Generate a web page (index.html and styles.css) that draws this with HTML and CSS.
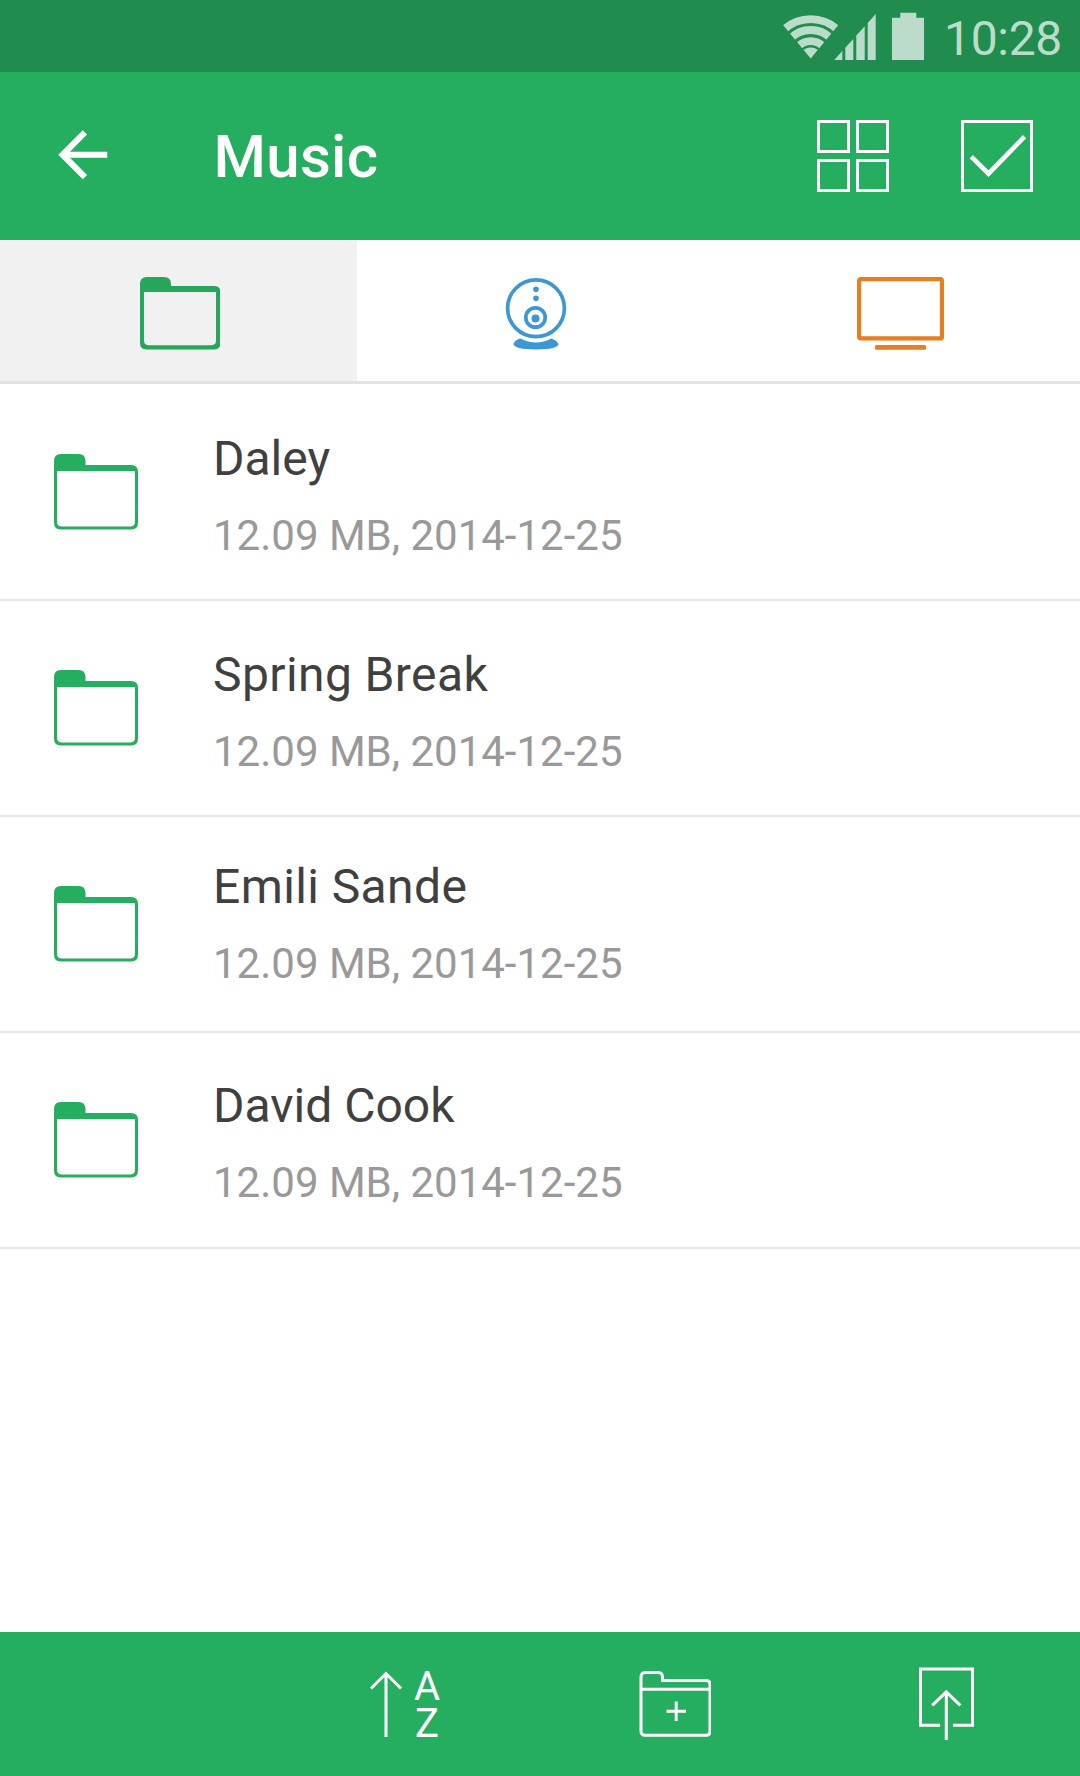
FILE: index.html
```html
<!DOCTYPE html>
<html lang="en">
<head>
    <meta charset="UTF-8">
    <meta name="viewport" content="width=device-width, initial-scale=1.0">
    <title>Music</title>
    <link rel="stylesheet" href="styles.css">
</head>
<body>
    <!-- shared folder icon for the list -->
    <svg class="sprite" width="0" height="0">
        <symbol id="folder" viewBox="0 0 84 76">
            <path fill-rule="evenodd" d="M0 7Q0 0 7 0H24.5Q31.500 0 31.500 7V11H77Q84 11 84 18V68.500Q84 75.500 77 75.500H7Q0 75.500 0 68.500ZM3 17V67.500Q3 72.500 8 72.500H76Q81 72.500 81 67.500V17Z"/>
        </symbol>
    </svg>

    <div class="statusbar">
        <svg class="wifi" width="56" height="48" viewBox="783 12 56 48">
            <clipPath id="fan"><path d="M810.700 58.500L776.400 16.900V0H845V16.900Z"/></clipPath>
            <g clip-path="url(#fan)">
                <circle cx="810.700" cy="58.500" r="11"/>
                <g class="waves">
                    <circle cx="810.700" cy="58.500" r="17.300"/>
                    <circle cx="810.700" cy="58.500" r="28.500"/>
                    <circle cx="810.700" cy="58.500" r="39.300"/>
                </g>
            </g>
        </svg>
        <svg class="signal" width="42" height="48" viewBox="834 12 42 48">
            <path d="M834.300 60L842.300 51V60ZM845.300 47.800L853.300 38.900V60H845.300ZM856.300 35.500L864.700 26.200V60H856.300ZM867.700 22.900L875.700 14V60H867.700Z"/>
        </svg>
        <svg class="battery" width="32" height="48" viewBox="0 0 32 48">
            <path d="M8.300 .7H24.300V5.700H32V48H0V5.700H8.300Z"/>
        </svg>
        <span class="clock">10:28</span>
    </div>

    <header class="appbar">
        <svg class="back" width="73.500" height="73.500" viewBox="0 0 24 24">
            <path d="M20 11H7.830l5.590-5.590L12 4l-8 8 8 8 1.410-1.410L7.830 13H20v-2z"/>
        </svg>
        <h1>Music</h1>
        <svg class="line-icon grid-view" width="72" height="72" viewBox="0 0 72 72">
            <path d="M1.500 1.500h30v30h-30zM40.500 1.500h30v30h-30zM1.500 40.500h30v30h-30zM40.500 40.500h30v30h-30z"/>
        </svg>
        <svg class="line-icon" width="72" height="72" viewBox="0 0 72 72">
            <path d="M1.500 1.500h69v69h-69z"/>
            <path class="tick" d="M10.300 36.700L27.500 53.700L63.500 16.700"/>
        </svg>
    </header>

    <nav class="tabs">
        <div class="tab active">
            <svg class="tab-folder" width="80.500" height="73" viewBox="0 0 80.500 73">
                <path fill-rule="evenodd" d="M0 7Q0 0 7 0H24Q31 0 31 7V9H74Q80.500 9 80.500 15.500V66Q80.500 72.500 74 72.500H6.500Q0 72.500 0 66ZM4 15V63.500Q4 68.300 9 68.300H71Q76 68.300 76 63.500V15Z"/>
            </svg>
        </div>
        <div class="tab">
            <svg class="webcam" width="62" height="73" viewBox="0 0 62 73">
                <circle class="ring" cx="31" cy="31.300" r="28.400"/>
                <circle class="ring" cx="30.500" cy="40.500" r="9.700"/>
                <circle cx="31" cy="12.300" r="2.800"/>
                <circle cx="31" cy="21.300" r="2.800"/>
                <circle cx="30.500" cy="41.500" r="4"/>
                <path d="M15.500 61.600Q31 69.500 46.500 61.600Q51 63 53.500 67Q53 72.300 31 72.500Q9 72.300 8.500 67Q10 63 15.500 61.600Z"/>
            </svg>
        </div>
        <div class="tab">
            <svg class="monitor" width="87" height="73" viewBox="0 0 87 73">
                <rect class="frame" x="2.100" y="2.100" width="82.800" height="59.300" rx="1.500"/>
                <rect x="18" y="68" width="51" height="4.700" rx="1.500"/>
            </svg>
        </div>
    </nav>

    <ul class="files">
        <li>
            <svg class="folder"><use href="#folder"/></svg>
            <div class="info">
                <p class="name">Daley</p>
                <p class="meta">12.09 MB, 2014-12-25</p>
            </div>
        </li>
        <li>
            <svg class="folder"><use href="#folder"/></svg>
            <div class="info">
                <p class="name wide">Spring Break</p>
                <p class="meta">12.09 MB, 2014-12-25</p>
            </div>
        </li>
        <li>
            <svg class="folder"><use href="#folder"/></svg>
            <div class="info raised">
                <p class="name wide">Emili Sande</p>
                <p class="meta">12.09 MB, 2014-12-25</p>
            </div>
        </li>
        <li>
            <svg class="folder"><use href="#folder"/></svg>
            <div class="info last">
                <p class="name">David Cook</p>
                <p class="meta">12.09 MB, 2014-12-25</p>
            </div>
        </li>
    </ul>

    <footer class="toolbar">
        <div class="sort">
            <svg class="line-icon" width="45" height="76" viewBox="369.500 1666 45 76">
                <path d="M386.500 1737V1673M371.500 1688.500L386.500 1673.500L401.500 1688.500"/>
            </svg>
            <div class="letters">
                <span>A</span>
                <span>Z</span>
            </div>
        </div>
        <svg class="line-icon" width="72" height="76" viewBox="639 1666 72 76">
            <path d="M641 1677Q641 1672.500 645.500 1672.500H658Q662.500 1672.500 662.500 1677V1680.500H706Q710 1680.500 710 1684.500V1731Q710 1735.300 706 1735.300H645.500Q641 1735.300 641 1731ZM641 1689.300H710M676.200 1701.500V1721M666.500 1711.200H686"/>
        </svg>
        <svg class="line-icon" width="72" height="76" viewBox="909 1666 72 76">
            <path d="M940 1725.300H920.500V1669H972.500V1725.300H953M946.300 1740V1692M932.300 1705.300L946.300 1691.800L960.300 1705.300"/>
        </svg>
    </footer>
</body>
</html>
```

FILE: styles.css
```css
* {
    box-sizing: border-box;
    margin: 0;
    padding: 0;
}
body {
    display: flex;
    flex-direction: column;
    height: 1776px;
    font-family: Roboto, "Liberation Sans", sans-serif;
    background-color: #fff;
    color: #404040;
}
svg {
    display: block;
    flex: none;
}

/* status bar */
.statusbar {
    display: flex;
    align-items: flex-start;
    justify-content: flex-end;
    height: 72px;
    padding: 12px 18px 0 0;
    background-color: #208c4d;
    color: #bcdccb;
    fill: #bcdccb;
}
.waves {
    fill: none;
    stroke: #bcdccb;
    stroke-width: 7.8;
}
.wifi {
    margin-right: -5px;
}
.battery {
    margin-left: 16px;
}
.clock {
    width: 121px;
    margin-left: 17px;
    font-size: 48px;
    line-height: 54px;
    letter-spacing: -0.3px;
    text-align: right;
    white-space: nowrap;
}

/* app bar */
.appbar {
    display: flex;
    align-items: center;
    height: 168px;
    padding: 0 47px 0 46px;
    background-color: #26ae60;
    color: #fff;
}
.back {
    margin-bottom: 3px;
    fill: #fff;
}
.appbar h1 {
    flex: 1;
    margin-left: 94px;
    padding-top: 1px;
    font-size: 60px;
    font-weight: 500;
    line-height: 70px;
    letter-spacing: 0.3px;
}
.line-icon {
    fill: none;
    stroke: #fff;
    stroke-width: 3;
}
.grid-view {
    margin-right: 72px;
}
.tick {
    stroke-width: 4.6;
}

/* tabs */
.tabs {
    display: grid;
    grid-template-columns: 357px 359px 1fr;
    height: 144px;
    border-bottom: 3px solid #e3e3e3;
}
.tab {
    display: flex;
    justify-content: center;
    padding-top: 37px;
}
.tab.active {
    padding-left: 3px;
    background-color: #f1f1f1;
}
.tab-folder {
    fill: #26a65b;
}
.webcam {
    margin-right: 1px;
    fill: #3c97d4;
}
.ring {
    fill: none;
    stroke: #3c97d4;
    stroke-width: 3.7;
}
.monitor {
    margin-left: 4px;
    fill: #e67e22;
}
.frame {
    fill: none;
    stroke: #e67e22;
    stroke-width: 4.2;
}

/* file list */
.files {
    flex: 1;
    padding-top: 1px;
    list-style: none;
}
.files li {
    display: flex;
    height: 216px;
    padding-left: 54px;
    border-bottom: 2px solid #e6e6e6;
}
.folder {
    width: 84px;
    height: 76px;
    margin-top: 69px;
    fill: #26ae60;
}
.info {
    padding: 46px 0 0 75px;
}
.info.raised {
    padding-top: 42px;
}
.info.last {
    padding-top: 45px;
}
.name {
    font-size: 48px;
    line-height: 56px;
}
.name.wide {
    letter-spacing: 0.4px;
}
.meta {
    margin-top: 24px;
    font-size: 42px;
    line-height: 50px;
    color: #999;
}

/* bottom toolbar */
.toolbar {
    display: grid;
    grid-template-columns: repeat(4, 1fr);
    align-items: center;
    justify-items: center;
    height: 144px;
    background-color: #26ae60;
}
.sort {
    display: flex;
    grid-column: 2;
    width: 72px;
    height: 76px;
}
.letters {
    display: flex;
    flex-direction: column;
    width: 26px;
    padding-top: 2px;
    font-size: 40px;
    line-height: 37px;
    text-align: center;
    color: #fff;
}
```
